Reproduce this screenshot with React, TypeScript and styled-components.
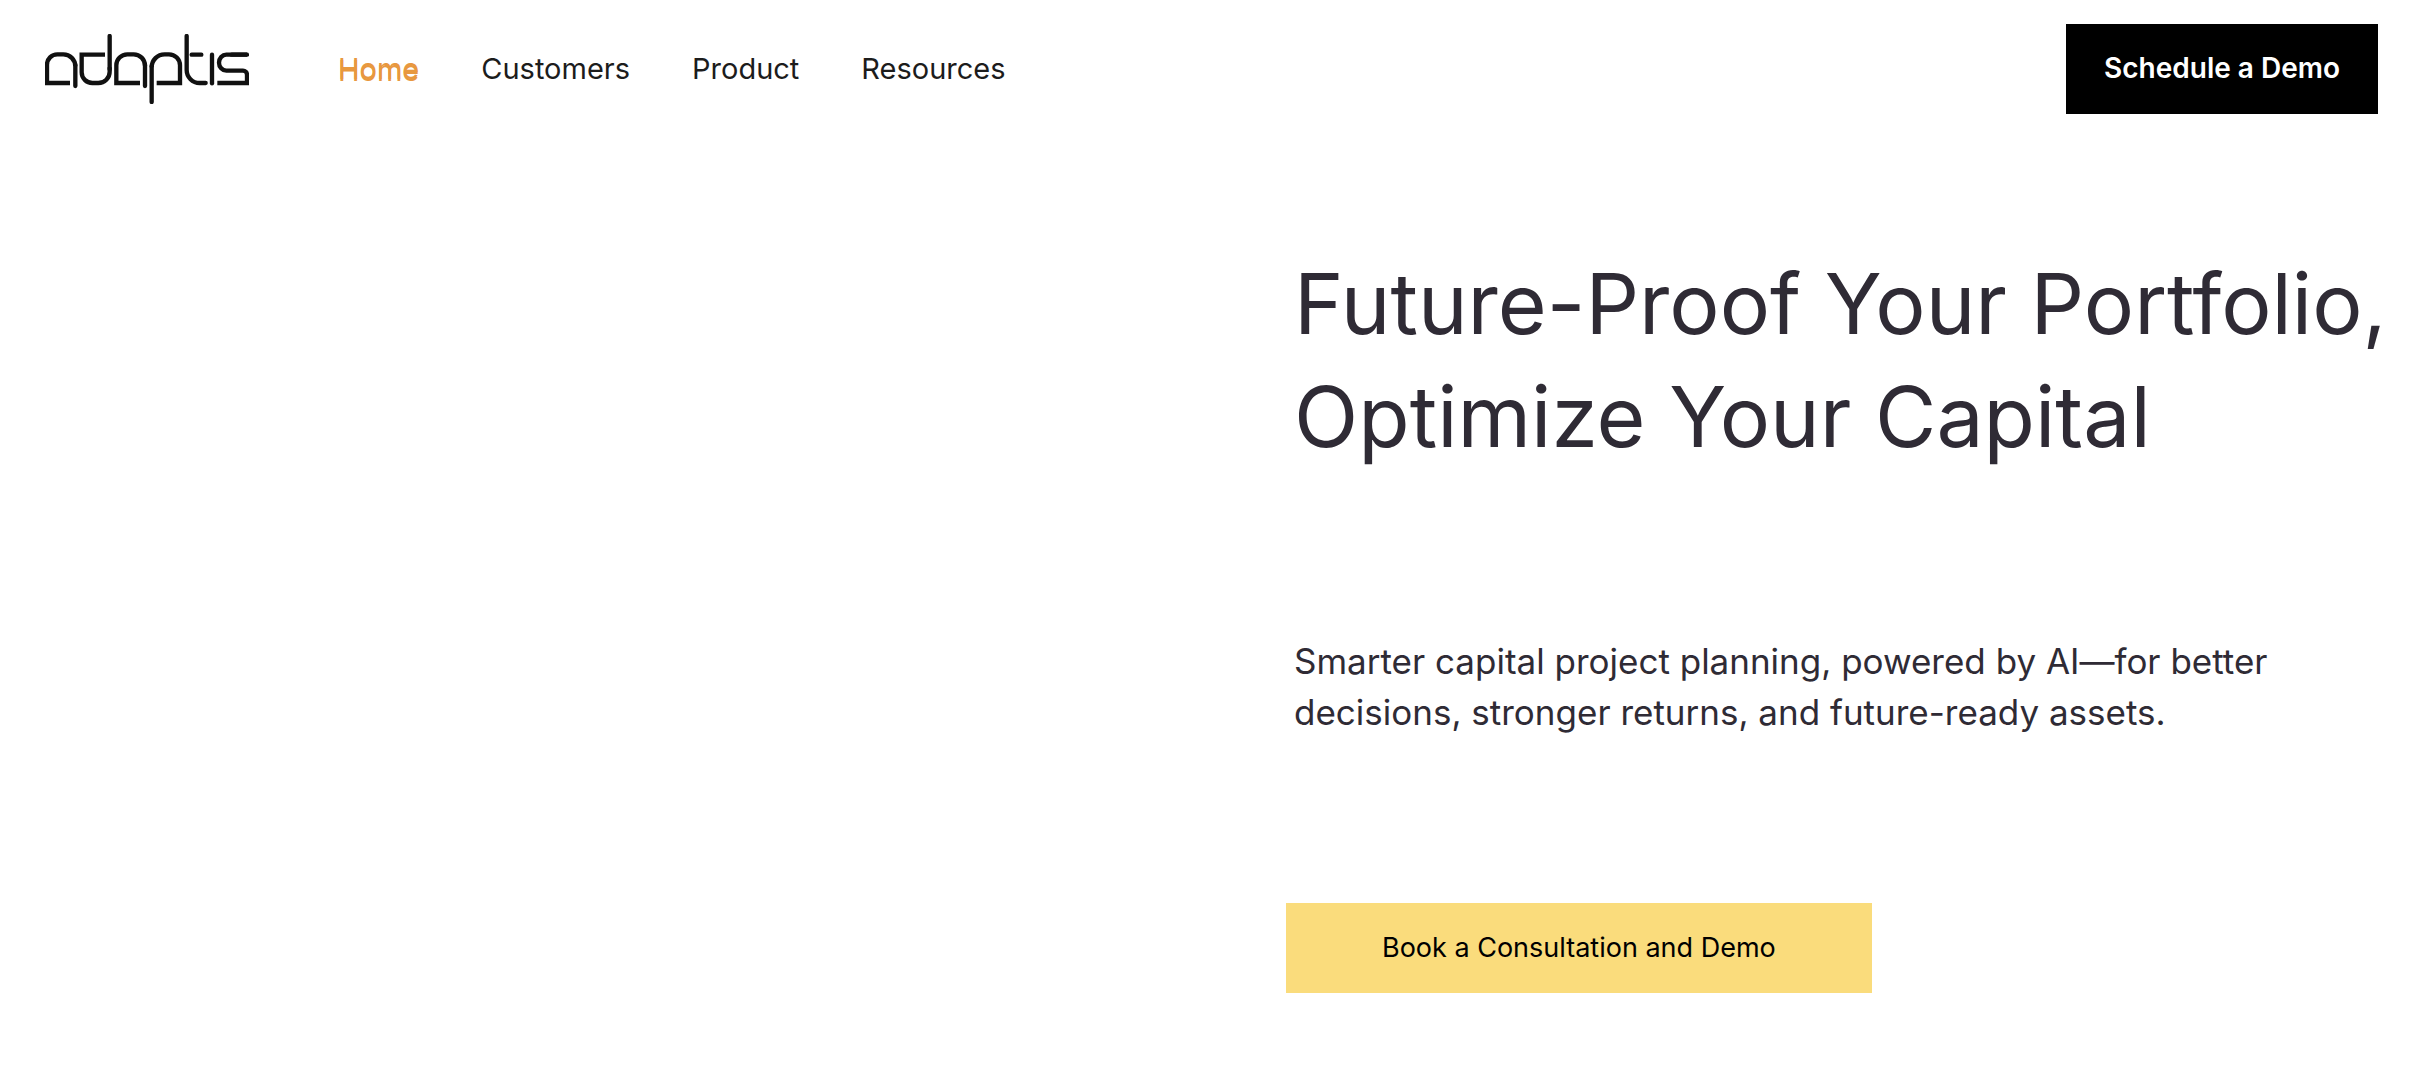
import React from "react";
import styled, { createGlobalStyle } from "styled-components";

const GlobalStyle = createGlobalStyle`
  *, *::before, *::after { box-sizing: border-box; }
  body {
    margin: 0;
    background: #ffffff;
    color: #2f2b35;
    font-family: Inter, "Open Sans", sans-serif;
  }
`;

const Header = styled.header`
  display: flex;
  align-items: center;
  gap: 88px;
  padding: 24px 44px;
`;

const LogoLink = styled.a`
  display: flex;
  flex: none;
  padding: 0 1px;
`;

const Nav = styled.nav`
  display: flex;
  flex: 1;
  gap: 62px;
`;

const NavLink = styled.a<{ $active?: boolean }>`
  color: ${(p) => (p.$active ? "#e8983f" : "#1c1c1c")};
  text-shadow: ${(p) => (p.$active ? "0 2px 0 #e8983f" : "none")};
  font-size: 29px;
  line-height: 36px;
  text-decoration: none;
`;

const Button = styled.button<{ $primary?: boolean }>`
  height: 90px;
  padding: 0 ${(p) => (p.$primary ? "38px" : "96px")} 2px;
  border: 0;
  background: ${(p) => (p.$primary ? "#000000" : "#fadc7c")};
  color: ${(p) => (p.$primary ? "#ffffff" : "#000000")};
  font-family: inherit;
  font-size: ${(p) => (p.$primary ? "28px" : "27px")};
  font-weight: ${(p) => (p.$primary ? 600 : 400)};
  white-space: nowrap;
  cursor: pointer;
`;

const Hero = styled.main`
  display: grid;
  grid-template-columns: calc(50% + 75px) minmax(0, 1fr);
  padding: 109px 0 72px;
`;

const HeroContent = styled.section`
  grid-column: 2;
  display: flex;
  flex-direction: column;
  align-items: flex-start;
`;

const Title = styled.h1`
  margin: 0 0 163px;
  padding-left: 8px;
  font-size: 84px;
  font-weight: 400;
  line-height: 113px;
  white-space: nowrap;
`;

const Lead = styled.p`
  margin: 0 0 165px;
  padding-left: 8px;
  font-size: 35px;
  line-height: 51px;
`;

const Logo = () => (
  <svg
    width="204"
    height="70"
    viewBox="0 0 612 210"
    fill="none"
    stroke="#111111"
    strokeWidth="13"
    role="img"
    aria-label="adaptis"
  >
    <path d="M75 147H6V92a31 31 0 0 1 31-31h18a36 36 0 0 1 36 36" />
    <path d="M91 92v64M194 6v100" strokeLinecap="round" />
    <path d="M180 62H110v53a32 32 0 0 0 32 32h18a34 34 0 0 0 34-34V100" />
    <path d="M285 147H214V94a33 33 0 0 1 33-33h19a34 34 0 0 1 34 34" />
    <path d="M300 92v64M320 96v108" strokeLinecap="round" />
    <path d="M320 100a39 39 0 0 1 39-39h13a33 33 0 0 1 33 33v53H335" />
    <path d="M425 6v102a39 39 0 0 0 39 39h18M440 62h29" strokeLinecap="round" />
    <path d="M501 62v86" strokeLinecap="round" />
    <path d="M606 62H544a22 24 0 0 0 0 48h50a12 12 0 0 1 12 12v25H517" />
    <path d="M560 62h46" strokeLinecap="round" />
  </svg>
);

const links = ["Home", "Customers", "Product", "Resources"];

export default function App() {
  return (
    <>
      <GlobalStyle />
      <Header>
        <LogoLink href="#home">
          <Logo />
        </LogoLink>
        <Nav aria-label="Main">
          {links.map((label, i) => (
            <NavLink
              key={label}
              href={`#${label.toLowerCase()}`}
              $active={i === 0}
              aria-current={i === 0 ? "page" : undefined}
            >
              {label}
            </NavLink>
          ))}
        </Nav>
        <Button type="button" $primary>
          Schedule a Demo
        </Button>
      </Header>
      <Hero>
        <HeroContent>
          <Title>
            Future-Proof Your Portfolio,
            <br />
            Optimize Your Capital
          </Title>
          <Lead>
            Smarter capital project planning, powered by AI—for better
            <br />
            decisions, stronger returns, and future-ready assets.
          </Lead>
          <Button type="button">Book a Consultation and Demo</Button>
        </HeroContent>
      </Hero>
    </>
  );
}
